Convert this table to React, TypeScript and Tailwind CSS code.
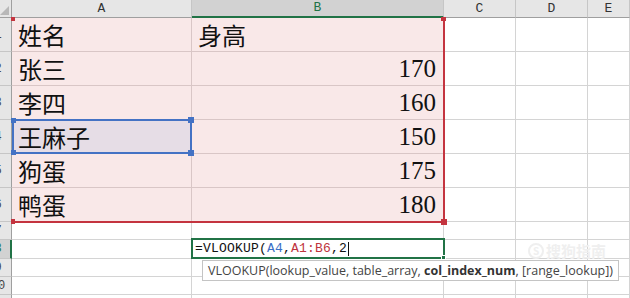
import React from "react";

/* ── Sheet data ─────────────────────────────────── */
const ROWS: { name: string; height: string | number }[] = [
  { name: "姓名", height: "身高" },
  { name: "张三", height: 170 },
  { name: "李四", height: 160 },
  { name: "王麻子", height: 150 },
  { name: "狗蛋", height: 175 },
  { name: "鸭蛋", height: 180 },
];

const COLS = ["A", "B", "C", "D", "E"];

const cjk = "font-['Noto_Sans_CJK_SC',sans-serif]";
const mono = "font-['Liberation_Mono','Noto_Sans_CJK_SC',monospace]";
const gridTemplate =
  "grid grid-cols-[12px_180px_252px_72px_72px_1fr] grid-rows-[18px_repeat(6,34px)_18px_19px_18px_18px_18px]";

function RowHeader({ n, active = false }: { n: number; active?: boolean }) {
  return (
    <div
      className={`overflow-hidden border-b border-[#c6c6c6] ${
        active ? "bg-[#d2d2d2] border-r-2 border-r-[#217346]" : "bg-[#e6e6e6] border-r border-r-[#9f9f9f]"
      }`}
    >
      <div
        className={`-ml-[15px] flex h-full w-[26px] items-center justify-center text-[12px] ${mono} ${
          active ? "text-[#217346]" : "text-[#444]"
        }`}
      >
        {n}
      </div>
    </div>
  );
}

function Cell({ className = "" }: { className?: string }) {
  return <div className={`border-b border-r border-[#d4d4d4] ${className}`} />;
}

export default function App() {
  return (
    <div className="relative h-[298px] w-[630px] overflow-hidden bg-white">
      <div className={gridTemplate}>
        {/* Corner + column headers */}
        <div className="relative border-b border-r border-[#9f9f9f] bg-[#e6e6e6]">
          <svg className="absolute left-0 top-[6px]" width="9" height="10" viewBox="0 0 9 10">
            <polygon points="9,0 9,9 0,9" fill="#b8b8b8" />
          </svg>
        </div>
        {COLS.map((c) => (
          <div
            key={c}
            className={`flex items-center justify-center border-r text-[13px] ${mono} ${
              c === "B"
                ? "border-b-2 border-b-[#217346] border-r-[#c6c6c6] bg-[#d2d2d2] text-[#217346]"
                : "border-b border-b-[#9f9f9f] border-r-[#c6c6c6] bg-[#e6e6e6] text-[#333]"
            }`}
          >
            {c}
          </div>
        ))}

        {/* Rows 1-6: the filled table */}
        {ROWS.map((r, i) => {
          const selected = i === 3;
          const isNum = typeof r.height === "number";
          return (
            <React.Fragment key={i}>
              <RowHeader n={i + 1} />
              <div
                className={`flex items-end border-b border-r border-[#d9c6c6] pb-[1px] pl-[6px] text-[24px] leading-[30px] text-[#111] ${cjk} ${
                  selected ? "bg-[#e6dde6]" : "bg-[#f9e8e8]"
                }`}
              >
                {r.name}
              </div>
              <div
                className={`flex items-end border-b border-r border-[#d9c6c6] bg-[#f9e8e8] pb-[1px] text-[#111] ${
                  isNum
                    ? "justify-end pr-[7px] font-['Liberation_Serif',serif] text-[25px] leading-[30px]"
                    : `pl-[6px] text-[24px] leading-[30px] ${cjk}`
                }`}
              >
                {r.height}
              </div>
              <Cell />
              <Cell />
              <Cell />
            </React.Fragment>
          );
        })}

        {/* Rows 7-11: empty */}
        {[7, 8, 9, 10, 11].map((n) => (
          <React.Fragment key={n}>
            <RowHeader n={n} active={n === 8} />
            <Cell />
            <Cell />
            <Cell />
            <Cell />
            <Cell />
          </React.Fragment>
        ))}
      </div>

      {/* Overlay layer: reference outlines, in-cell editor, hint */}
      <div className={`pointer-events-none absolute inset-0 ${gridTemplate}`}>
        {/* Range reference outline A1:B6 */}
        <div className="relative col-start-2 col-span-2 row-start-2 row-span-6 -mb-px -mr-px border-b-2 border-r-2 border-[#c4343f]">
          <span className="absolute -left-px -top-px h-[4px] w-[4px] bg-[#c4343f]" />
          <span className="absolute -right-[3px] -top-px h-[4px] w-[5px] bg-[#c4343f]" />
          <span className="absolute -bottom-[3px] -left-px h-[5px] w-[4px] bg-[#c4343f]" />
          <span className="absolute -bottom-[4px] -right-[4px] h-[6px] w-[6px] bg-[#c4343f]" />
        </div>

        {/* Reference outline A4 */}
        <div className="relative col-start-2 row-start-5 -mt-px border-2 border-[#4472c4]">
          <span className="absolute -left-[3px] -top-[3px] h-[5px] w-[5px] bg-[#4472c4]" />
          <span className="absolute -right-[4px] -top-[4px] h-[6px] w-[6px] bg-[#4472c4]" />
          <span className="absolute -bottom-[3px] -left-[3px] h-[5px] w-[5px] bg-[#4472c4]" />
          <span className="absolute -bottom-[4px] -right-[4px] h-[6px] w-[6px] bg-[#4472c4]" />
        </div>

        {/* In-cell editor B8 */}
        <div className="relative col-start-3 row-start-9">
          <div
            className={`absolute -left-px -top-[2px] flex h-[21px] w-[254px] items-center border-2 border-[#217346] bg-white pl-[2px] text-[13px] tracking-[0.2px] text-[#111] ${mono}`}
          >
            <span>=VLOOKUP(</span>
            <span className="text-[#3a6fc6]">A4</span>
            <span>,</span>
            <span className="text-[#c0343d]">A1:B6</span>
            <span>,2</span>
            <span className="ml-px h-[14px] w-px bg-[#111]" />
            <span className="absolute -bottom-[3px] -right-[3px] h-[5px] w-[5px] border border-white bg-[#217346]" />
          </div>
          {/* argument hint */}
          <div className="absolute left-[10px] top-[20px] whitespace-nowrap border border-[#c4c4c4] bg-white px-[5px] py-[1px] font-['Open_Sans',sans-serif] text-[12.5px] leading-[17px] text-[#444]">
            VLOOKUP(lookup_value, table_array, <b className="font-bold text-[#333]">col_index_num</b>, [range_lookup])
          </div>
        </div>
      </div>

      {/* faint watermark */}
      <div className={`pointer-events-none absolute left-[528px] top-[240px] flex items-center gap-[2px] text-[15px] font-bold text-[#efefef] ${cjk}`}>
        <span className="flex h-[16px] w-[16px] items-center justify-center rounded-full border-2 border-[#efefef] text-[10px] leading-none">S</span>
        <span>搜狗指南</span>
      </div>
    </div>
  );
}
